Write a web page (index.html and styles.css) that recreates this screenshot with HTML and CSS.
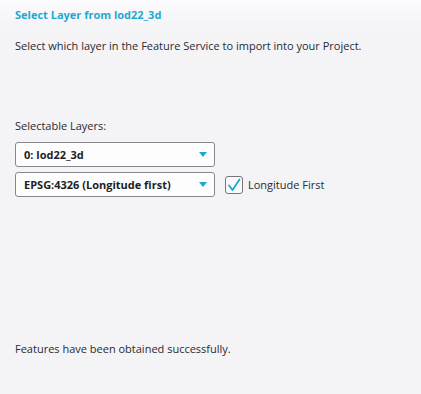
FILE: index.html
```
<!DOCTYPE html>
<html>
<head>
<meta charset="utf-8">
<link rel="stylesheet" href="styles.css">
</head>
<body>
<div class="page">
  <h1 class="title">Select Layer from lod22_3d</h1>
  <p class="desc">Select which layer in the Feature Service to import into your Project.</p>
  <div class="form">
    <div class="label">Selectable Layers:</div>
    <div class="select"><span>0: lod22_3d</span><span class="arrow"></span></div>
    <div class="row">
      <div class="select"><span>EPSG:4326 (Longitude first)</span><span class="arrow"></span></div>
      <label class="check">
        <span class="box"><svg width="14" height="14" viewBox="0 0 14 14"><path d="M2 7.5 L5.5 12 L12.5 1.5" fill="none" stroke="#1ba7cf" stroke-width="1.8" stroke-linecap="round" stroke-linejoin="round"/></svg></span>
        <span>Longitude First</span>
      </label>
    </div>
  </div>
  <p class="status">Features have been obtained successfully.</p>
</div>
</body>
</html>
```
FILE: styles.css
```
html, body {
  margin: 0;
  padding: 0;
}
body {
  width: 421px;
  height: 394px;
  background: linear-gradient(to bottom, #fbfbfd 0px, #f4f4f6 30px, #f4f4f6 100%);
  font-family: "Open Sans", "Noto Sans", sans-serif;
  font-size: 11px;
  color: #2a2a30;
}
.page {
  padding: 7px 15px 0 15px;
  display: flex;
  flex-direction: column;
}
.title {
  margin: 0;
  font-size: 11px;
  font-weight: 700;
  color: #1fa9d2;
  line-height: 15px;
}
.desc {
  margin: 16px 0 0 0;
  line-height: 15px;
}
.form {
  margin-top: 65px;
  display: flex;
  flex-direction: column;
}
.label {
  line-height: 15px;
  margin-bottom: 9px;
}
.select {
  box-sizing: border-box;
  width: 200px;
  height: 25px;
  border: 1px solid #88888c;
  border-radius: 3px;
  background: #fdfdfd;
  display: flex;
  align-items: center;
  justify-content: space-between;
  padding: 0 6px 0 8px;
  font-weight: 700;
  color: #1e1e24;
}
.arrow {
  width: 0;
  height: 0;
  border-left: 4px solid transparent;
  border-right: 4px solid transparent;
  border-top: 5px solid #1ba7cf;
  margin-right: 1px;
}
.row {
  margin-top: 5px;
  display: flex;
  align-items: center;
  gap: 10px;
}
.check {
  display: flex;
  align-items: center;
  gap: 5px;
}
.box {
  box-sizing: border-box;
  width: 18px;
  height: 18px;
  border: 1px solid #76767a;
  border-radius: 3px;
  background: #fafafa;
  display: flex;
  align-items: center;
  justify-content: center;
}
.status {
  margin: 144px 0 0 0;
  line-height: 15px;
}
```
